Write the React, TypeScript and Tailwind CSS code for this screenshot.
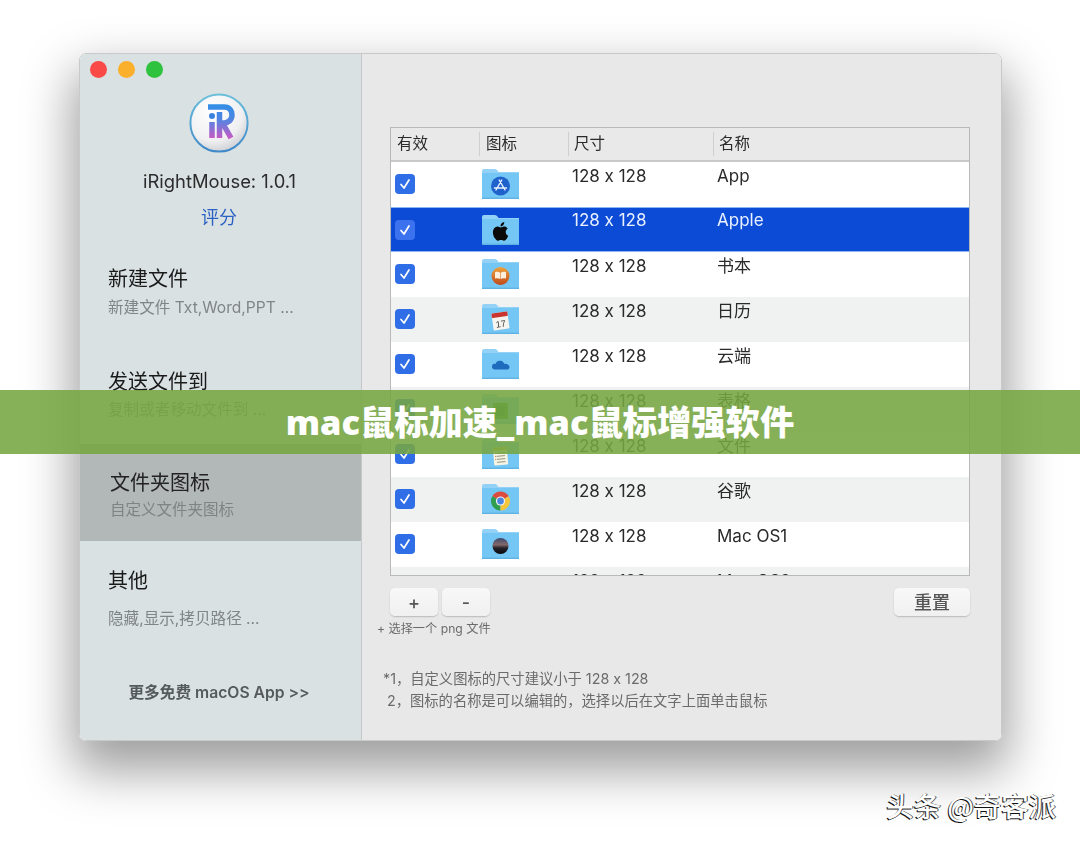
import React from "react";

const FONT = "font-['Inter','Noto_Sans_CJK_SC',sans-serif]";

function Glyph({ kind }: { kind: string }) {
  switch (kind) {
    case "app":
      return (
        <g>
          <circle cx="18.5" cy="17" r="9.5" fill="#1f62cc" />
          <path d="M19.8 11 L14 21 M17.2 11 L23 21 M12.5 19 H24.5" stroke="#e8f2ff" strokeWidth="1.4" strokeLinecap="round" fill="none" />
        </g>
      );
    case "apple":
      return (
        <path
          transform="translate(9.2 7) scale(0.78)"
          fill="#0a0a0a"
          d="M12.152 6.896c-.948 0-2.415-1.078-3.96-1.04-2.04.027-3.91 1.183-4.961 3.014-2.117 3.675-.546 9.103 1.519 12.09 1.013 1.454 2.208 3.09 3.792 3.039 1.52-.065 2.09-.987 3.935-.987 1.831 0 2.35.987 3.96.948 1.637-.026 2.676-1.48 3.676-2.948 1.156-1.688 1.636-3.325 1.662-3.415-.039-.013-3.182-1.221-3.22-4.857-.026-3.04 2.48-4.494 2.597-4.559-1.429-2.09-3.623-2.324-4.39-2.376-2-.156-3.675 1.09-4.61 1.09zM15.53 3.83c.843-1.012 1.4-2.427 1.245-3.83-1.207.052-2.662.805-3.532 1.818-.78.896-1.454 2.338-1.273 3.714 1.338.104 2.715-.688 3.559-1.701"
        />
      );
    case "book":
      return (
        <g>
          <defs>
            <linearGradient id="bookG" x1="0" y1="0" x2="0" y2="1">
              <stop offset="0" stopColor="#f0a23c" />
              <stop offset="1" stopColor="#bf4a1e" />
            </linearGradient>
          </defs>
          <circle cx="18.5" cy="17" r="9" fill="url(#bookG)" />
          <path d="M13 13.2 C15 12.6 17 12.8 18.2 13.8 V20 C17 19.2 15 19 13 19.6 Z M24 13.2 C22 12.6 20 12.8 18.8 13.8 V20 C20 19.2 22 19 24 19.6 Z" fill="#fbeedd" />
        </g>
      );
    case "cal":
      return (
        <g transform="rotate(-8 18.5 17)">
          <rect x="10.5" y="8.5" width="16" height="17" rx="1" fill="#f6f4ee" />
          <rect x="10.5" y="8.5" width="16" height="4.5" rx="1" fill="#c9352e" />
          <text x="18.5" y="23" textAnchor="middle" fontSize="9" fill="#333" fontFamily="Liberation Sans, sans-serif">17</text>
        </g>
      );
    case "cloud":
      return <path transform="translate(0 -2.5)" d="M13.5 23 C10.5 23 9.5 20.6 10.2 18.9 C10.9 17.3 12.5 17.2 13.5 17.4 C14.2 14.6 17.2 13.4 19.6 14.6 C21 15.2 21.8 16.2 22.1 17.3 C24.6 16.7 27.5 18.1 27.5 20.4 C27.5 22 26.2 23 24.6 23 Z" fill="#1d6bbd" />;
    case "excel":
      return (
        <g>
          <rect x="11" y="9" width="15" height="16" rx="1" fill="#1e8a3c" />
          <rect x="14" y="12" width="9" height="10" fill="#0f6b2a" />
        </g>
      );
    case "notes":
      return (
        <g transform="rotate(-5 18.5 17)">
          <rect x="11.5" y="8" width="14" height="18" rx="1" fill="#f7f4e4" />
          <rect x="11.5" y="8" width="14" height="3" fill="#d7b743" />
          <path d="M14.5 14 H23 M14.5 17 H23 M14.5 20 H23 M14.5 23 H23" stroke="#8b8b7a" strokeWidth="0.9" />
          <path d="M13 14 H13.8 M13 17 H13.8 M13 20 H13.8" stroke="#c9502f" strokeWidth="0.9" />
        </g>
      );
    case "chrome":
      return (
        <g>
          <path d="M18.5 17 L10.3 12.25 A9.5 9.5 0 0 1 26.7 12.25 Z" fill="#dd4b3e" />
          <path d="M18.5 17 L10.3 12.25 A9.5 9.5 0 0 0 18.5 26.5 Z" fill="#2f9e4f" />
          <path d="M18.5 17 L26.7 12.25 A9.5 9.5 0 0 1 18.5 26.5 Z" fill="#f5c53c" />
          <circle cx="18.5" cy="17" r="4.6" fill="#f4f4f4" />
          <circle cx="18.5" cy="17" r="3.4" fill="#4a86e0" />
        </g>
      );
    default:
      return (
        <g>
          <defs>
            <linearGradient id="osG" x1="0" y1="0" x2="0" y2="1">
              <stop offset="0" stopColor="#3a4a6e" />
              <stop offset="0.42" stopColor="#85686a" />
              <stop offset="0.62" stopColor="#26232a" />
              <stop offset="1" stopColor="#08080c" />
            </linearGradient>
          </defs>
          <circle cx="18.5" cy="17" r="8" fill="url(#osG)" />
        </g>
      );
  }
}

function FolderIcon({ kind }: { kind: string }) {
  return (
    <svg width="37" height="30" viewBox="0 0 37 30" className="block">
      <path d="M0 2 Q0 0 2 0 H13 Q14.5 0 15.5 1.5 L16.5 3 H37 V5 H0 Z" fill="#93d2f6" />
      <path d="M0 4 H37 V29 Q37 30 36 30 H1 Q0 30 0 29 Z" fill="#74c6f4" />
      <rect x="0" y="28.6" width="37" height="1.4" fill="#5fb3e4" />
      <Glyph kind={kind} />
    </svg>
  );
}

function Check({ selected }: { selected: boolean }) {
  return (
    <div className={`flex h-5 w-5 items-center justify-center rounded-[4px] ${selected ? "bg-[#3d72ee]" : "bg-[#2f6ee6]"}`}>
      <svg width="14" height="14" viewBox="0 0 14 14">
        <path d="M3 7.5 L6 11 L11 3" stroke="#fff" strokeWidth="1.7" fill="none" strokeLinecap="round" strokeLinejoin="round" />
      </svg>
    </div>
  );
}

const rows = [
  { name: "App", icon: "app", bg: "bg-white" },
  { name: "Apple", icon: "apple", bg: "bg-[#0b4bd6]", selected: true },
  { name: "书本", icon: "book", bg: "bg-white" },
  { name: "日历", icon: "cal", bg: "bg-[#f0f1f1]" },
  { name: "云端", icon: "cloud", bg: "bg-white" },
  { name: "表格", icon: "excel", bg: "bg-[#f0f1f1]" },
  { name: "文件", icon: "notes", bg: "bg-white" },
  { name: "谷歌", icon: "chrome", bg: "bg-[#f0f1f1]" },
  { name: "Mac OS1", icon: "os", bg: "bg-white" },
  { name: "Mac OS2", icon: "os", bg: "bg-[#f0f1f1]", clipped: true },
];

function Logo() {
  return (
    <svg width="60" height="60" viewBox="0 0 60 60" className="ml-[109px] mt-[15px] block">
      <defs>
        <radialGradient id="logoBg" cx="0.4" cy="0.3" r="0.85">
          <stop offset="0" stopColor="#ffffff" />
          <stop offset="0.6" stopColor="#f0f0f2" />
          <stop offset="1" stopColor="#b9bcc2" />
        </radialGradient>
        <linearGradient id="logoRing" x1="0" y1="0" x2="0" y2="1">
          <stop offset="0" stopColor="#6cc0dc" />
          <stop offset="1" stopColor="#3f88c9" />
        </linearGradient>
        <linearGradient id="logoLeg" gradientUnits="userSpaceOnUse" x1="0" y1="10" x2="0" y2="46">
          <stop offset="0" stopColor="#2f8fe6" />
          <stop offset="0.45" stopColor="#4f86e2" />
          <stop offset="1" stopColor="#cc58c4" />
        </linearGradient>
      </defs>
      <circle cx="30" cy="30" r="28.6" fill="url(#logoBg)" stroke="url(#logoRing)" strokeWidth="2" />
      <circle cx="23" cy="23" r="3" fill="#3b82dc" />
      <path d="M23 29 V45" stroke="url(#logoLeg)" strokeWidth="5.5" fill="none" />
      <path d="M19 14 H35 C41 14 43 18 43 22 C43 27 39 30 35 30 H30.5 M30.5 19 V45 M33.5 30 L42 45" stroke="url(#logoLeg)" strokeWidth="5.5" fill="none" />
    </svg>
  );
}

function Btn({ label, w, text }: { label: string; w: string; text: string }) {
  return (
    <div className={`flex h-7 items-center justify-center rounded-[5px] bg-gradient-to-b from-[#f8f8f8] to-[#f0f0f0] font-medium text-[#555] shadow-[0_1px_1.5px_rgba(0,0,0,0.2)] ${w} ${text}`}>
      {label}
    </div>
  );
}

export default function App() {
  return (
    <div className={`relative h-[845px] w-[1080px] overflow-hidden bg-white pl-[79px] pt-[53px] [font-feature-settings:'calt'_0] ${FONT}`}>
      <div className="flex h-[688px] w-[923px] overflow-hidden rounded-[7px] border border-[#c9c9c9] shadow-[0_24px_50px_6px_rgba(0,0,0,0.38)] blur-[0.3px]">
        {/* Sidebar */}
        <aside className="flex w-[281px] shrink-0 flex-col bg-[#dae1e2]">
          <div className="flex gap-[11px] pl-[10px] pt-[7px]">
            <span className="h-[17px] w-[17px] rounded-full bg-[#f94a47]" />
            <span className="h-[17px] w-[17px] rounded-full bg-[#fbb02b]" />
            <span className="h-[17px] w-[17px] rounded-full bg-[#2fc23e]" />
          </div>
          <Logo />
          <p className="mt-[16px] pr-[2px] text-center text-[18.4px] leading-6 text-[#2c2c2c]">iRightMouse: 1.0.1</p>
          <p className="mt-[13px] pr-[3px] text-center text-[18px] leading-6 text-[#2a62c4]">评分</p>

          <div className="mt-[35px] pl-[28px]">
            <p className="text-[20px] leading-7 text-[#1a1a1a]">新建文件</p>
            <p className="mt-[5px] text-[15.6px] leading-5 text-[#808586]">新建文件 Txt,Word,PPT ...</p>
          </div>
          <div className="mt-[50px] pl-[28px]">
            <p className="text-[20px] leading-7 text-[#1a1a1a]">发送文件到</p>
            <p className="mt-[4px] text-[15.6px] leading-5 text-[#808586]">复制或者移动文件到 ...</p>
          </div>
          <div className="mt-[24px] bg-[#b2b7b7] pb-[21px] pl-[30px] pt-[25px]">
            <p className="text-[20px] leading-7 text-[#222]">文件夹图标</p>
            <p className="mt-[3px] text-[15.5px] leading-5 text-[#7e8384]">自定义文件夹图标</p>
          </div>
          <div className="mt-[26px] pl-[28px]">
            <p className="text-[20px] leading-7 text-[#1a1a1a]">其他</p>
            <p className="mt-[14px] text-[15.6px] leading-5 text-[#808586]">隐藏,显示,拷贝路径 ...</p>
          </div>
          <p className="mt-[53px] pr-[3px] text-center text-[15.7px] font-semibold leading-[22px] text-[#555a5b]">更多免费 macOS App &gt;&gt;</p>
        </aside>

        {/* Main */}
        <main className="flex-1 border-l border-[#c6c9c9] bg-[#e8e8e8] pl-[15px] pt-[73px]">
          <div className="ml-[13px] h-[449px] w-[580px] overflow-hidden border border-[#b9b9b9]">
            <div className="grid h-[34px] grid-cols-[88px_89px_145px_1fr] items-center border-b-2 border-[#c9c9c9] bg-[#e9e9e9] text-[15.5px] text-[#2a2a2a]">
              <span className="pl-[6px]">有效</span>
              <span className="h-[24px] border-l border-[#cfcfcf] pl-[6px] leading-6">图标</span>
              <span className="h-[24px] border-l border-[#cfcfcf] pl-[5px] leading-6">尺寸</span>
              <span className="h-[24px] border-l border-[#cfcfcf] pl-[5px] leading-6">名称</span>
            </div>
            {rows.map((r) => (
              <div
                key={r.name}
                className={`grid h-[45px] grid-cols-[88px_89px_145px_1fr] text-[17px] leading-5 ${r.bg} ${r.selected ? "border-y border-[#8db4f3] text-[#e9f0ff]" : "text-[#2a2a2a]"}`}
              >
                <div className="pl-[4px] pt-[12px]"><Check selected={!!r.selected} /></div>
                <div className={`pl-[3px] ${r.clipped ? "pt-[9px]" : "pt-[7px]"}`}><FolderIcon kind={r.icon} /></div>
                <div className={`pl-[4px] ${r.selected ? "pt-[2px]" : "pt-[4px]"}`}>128 x 128</div>
                <div className={`pl-[4px] ${r.selected ? "pt-[2px]" : "pt-[4px]"}`}>{r.name}</div>
              </div>
            ))}
          </div>

          <div className="ml-[13px] mt-3 flex w-[580px] justify-between">
            <div className="flex gap-1">
              <Btn label="+" w="w-12" text="text-[18px]" />
              <Btn label="-" w="w-12" text="text-[18px]" />
            </div>
            <Btn label="重置" w="w-[76px]" text="text-[18px]" />
          </div>
          <p className="mt-[4px] text-[12.2px] leading-[18px] text-[#6b6b6b]">+ 选择一个 png 文件</p>
          <p className="ml-[6px] mt-[30px] text-[14.3px] leading-[22px] text-[#6b6b6b]">*1，自定义图标的尺寸建议小于 128 x 128</p>
          <p className="ml-[10px] text-[14.3px] leading-[22px] text-[#6b6b6b]">2，图标的名称是可以编辑的，选择以后在文字上面单击鼠标</p>
        </main>
      </div>

      {/* Banner overlay */}
      <div className="absolute left-0 right-0 top-[390px] flex h-[64px] items-center justify-center bg-[rgba(118,166,66,0.88)]">
        <span className="font-['Open_Sans','Noto_Sans_CJK_SC',sans-serif] text-[34.3px] font-extrabold text-white">mac鼠标加速_mac鼠标增强软件</span>
      </div>

      {/* Watermark */}
      <span className="absolute right-[24px] top-[788px] font-['Noto_Sans_CJK_SC',sans-serif] text-[27.4px] font-medium leading-[34px] text-white [text-shadow:-1px_1px_0_#111,1px_0_0_#444]">头条 @奇客派</span>
    </div>
  );
}
